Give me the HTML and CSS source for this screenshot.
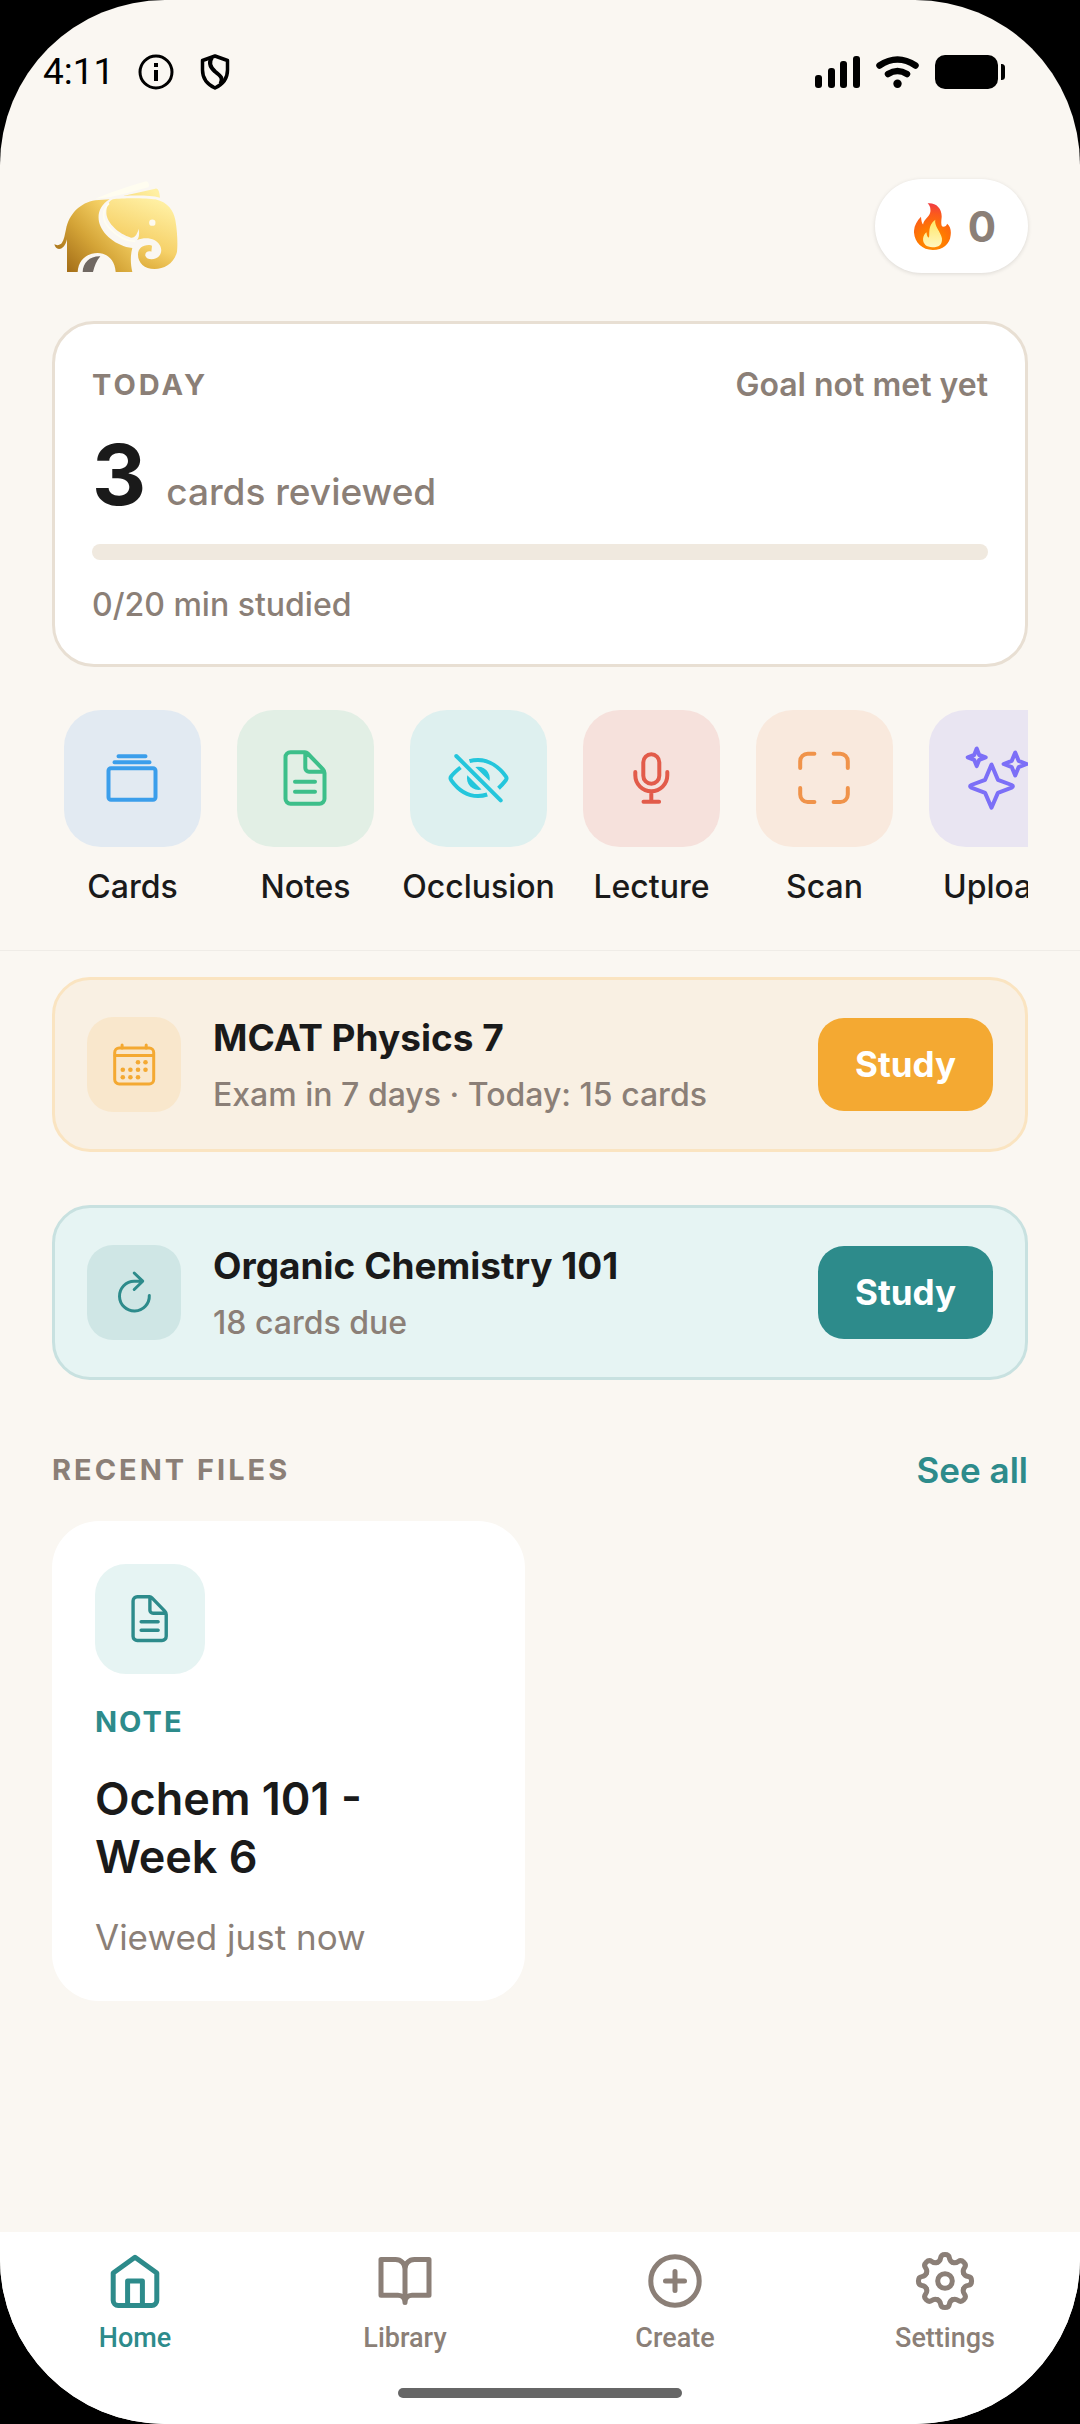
FILE: index.html
```
<!DOCTYPE html>
<html lang="en">
<head>
<meta charset="utf-8">
<meta name="viewport" content="width=device-width">
<title>Home</title>
<link rel="stylesheet" href="styles.css">
</head>
<body>
<div class="screen">
  <div class="status">
    <span class="clock">4:11</span>
    <svg class="status-info" width="36" height="36" viewBox="0 0 36 36"><circle cx="18" cy="18" r="16" fill="none" stroke="#000" stroke-width="3"/><path d="M16 9h4v4h-4zM16 16h4v11h-4z"/></svg>
    <svg width="30" height="36" viewBox="0 0 30 36" fill="none" stroke="#000" stroke-width="3.500" stroke-linejoin="round"><path d="M15 2L2.500 6.500V16c0 8 5 14.500 12.500 18C22.500 30.500 27.500 24 27.500 16V6.500z"/><path stroke-width="4" d="M12 3.500C8.500 8 10 13 15 17.500c6 4.500 8.500 7 5.500 12.500"/></svg>
    <span class="status-right">
      <svg width="45" height="32" viewBox="0 0 45 32"><rect y="19" width="7" height="13" rx="3"/><rect x="13" y="12" width="7" height="20" rx="3"/><rect x="25" y="5" width="7" height="27" rx="3"/><rect x="38" width="7" height="32" rx="3"/></svg>
      <svg width="43" height="32" viewBox="0 0 43 32" fill="none" stroke="#000" stroke-width="6.500" stroke-linecap="round"><path d="M3.500 9.500Q21.500-2.500 39.500 9.500M12 18Q21.500 12 31 18"/><circle cx="21.500" cy="27.700" r="4.200" fill="#000" stroke="none"/></svg>
      <svg width="70" height="34" viewBox="0 0 70 34"><rect width="63" height="34" rx="10"/><path d="M66 9c3 0 4 1 4 4v8c0 3-1 4-4 4z"/></svg>
    </span>
  </div>

  <header class="top">
    <div class="brand">
      <svg width="126" height="93" viewBox="35 30 378 279" role="img" aria-label="Elephant logo">
        <defs>
          <linearGradient id="gold" gradientUnits="userSpaceOnUse" x1="80" y1="330" x2="350" y2="70"><stop offset="0" stop-color="#9c6512"/><stop offset=".35" stop-color="#d4a437"/><stop offset=".62" stop-color="#f4cf63"/><stop offset="1" stop-color="#fff0a3"/></linearGradient>
          <linearGradient id="head" gradientUnits="userSpaceOnUse" x1="270" y1="300" x2="350" y2="90"><stop offset="0" stop-color="#d9a532"/><stop offset=".4" stop-color="#f6d169"/><stop offset="1" stop-color="#fff0a3"/></linearGradient>
        </defs>
        <path fill="url(#gold)" d="M80 306V208C76 225 68 237 56 237C48 237 44 230 42 223C50 227 58 226 64 220C72 208 73 195 77 178C86 132 120 98 165 91L208 88C180 105 171 130 176 155C184 192 228 228 276 234C270 255 270 280 276 306H226C224 270 200 249 172 249C140 249 114 270 112 306z"/>
        <path fill="#706862" d="M127 306C128 278 148 258 180 259C168 272 163 288 158 306z"/>
        <path fill="url(#head)" d="M218 88C245 83 320 84 345 88C385 97 400 125 405 150C412 190 412 225 410 245C402 280 372 297 343 297C312 297 293 278 293 254C293 236 306 225 325 225C330 225 334 226 335 228L333 245C323 241 313 248 315 257C318 268 335 270 347 265C363 257 367 240 358 225C348 206 318 199 290 210C298 200 296 190 296 176C290 190 286 204 272 203C235 192 200 160 198 130C198 108 205 93 218 88z"/>
        <path fill="none" stroke="#fffdf0" stroke-width="5" d="M206 100C184 120 185 150 205 172C228 196 255 214 285 214"/>
        <circle cx="336" cy="158" r="9.500" fill="#fdfaf0"/>
        <path fill="url(#gold)" d="M248 78L345 56C355 54 358 70 359 83C330 76 290 76 248 78z"/>
        <path fill="#fffdf0" d="M165 86C200 72 270 46 318 34C326 36 328 48 324 52C300 58 240 76 210 81z"/>
      </svg>
    </div>
    <button class="streak" type="button" aria-label="Streak: 0 days">
      <svg width="37" height="47" viewBox="1086 610 106 140" preserveAspectRatio="none">
        <defs>
          <radialGradient id="fire" gradientUnits="userSpaceOnUse" cx="1138" cy="725" r="110"><stop offset="0" stop-color="#ff9500"/><stop offset=".35" stop-color="#ff7a00"/><stop offset=".75" stop-color="#fb5a1c"/><stop offset="1" stop-color="#f2403f"/></radialGradient>
          <linearGradient id="core" x1="0" y1="0" x2="0" y2="1"><stop offset="0" stop-color="#ffe765"/><stop offset="1" stop-color="#fff6c0"/></linearGradient>
        </defs>
        <path fill="url(#fire)" d="M1125 611C1150 608 1168 628 1165 655C1163 672 1164 681 1170 681C1176 681 1179 677 1181 672C1190 680 1193 692 1191 706C1189 732 1168 750 1140 750C1110 750 1088 728 1086 698C1085 680 1094 664 1106 651C1107 662 1108 670 1112 674C1113 658 1132 650 1133 635C1134 623 1130 616 1125 611z"/>
        <path fill="url(#core)" d="M1147 660C1143 678 1163 697 1166 715C1168 734 1157 742 1139 742C1122 742 1111 732 1112 716C1113 707 1117 700 1122 697C1122 706 1125 713 1129 713C1132 702 1124 678 1147 660z"/>
      </svg>
      <span>0</span>
    </button>
  </header>

  <section class="overview">
    <div class="today">
      <div class="today-head"><h2 class="eyebrow">TODAY</h2><span class="goal">Goal not met yet</span></div>
      <p class="count"><strong>3</strong><span>cards reviewed</span></p>
      <div class="bar" role="progressbar" aria-label="Minutes studied" aria-valuenow="0" aria-valuemin="0" aria-valuemax="20"></div>
      <p class="minutes">0/20 min studied</p>
    </div>
    <div class="tools">
      <button class="tool" type="button"><span class="tile cards"><svg class="ico" viewBox="0 0 60 60"><path d="M15.500 7.300h27M11.500 13.300h35"/><rect x="5.500" y="19.300" width="47" height="31.400" rx="2.500"/></svg></span>Cards</button>
      <button class="tool" type="button"><span class="tile notes"><svg class="ico" viewBox="0 0 60 60"><path d="M29 3.300H14.500a5 5 0 0 0-5 5v41.400a5 5 0 0 0 5 5h29a5 5 0 0 0 5-5V24c0-1.700-.5-2.700-1.700-3.900L31.700 4.500C30.900 3.700 30 3.300 29 3.300zM29.300 4v15a3.700 3.700 0 0 0 3.700 3.700h15M19 32.700h20M19 42.700h20"/></svg></span>Notes</button>
      <button class="tool" type="button"><span class="tile occlusion"><svg class="ico" viewBox="0 0 60 60"><path d="M7.300 7l44.400 44.400"/><path stroke-linecap="butt" d="M11.500 18.500C7 22 4 25 2.300 27.300c-1 1.300-1 2.700 0 4C8.500 40 18 47 29 47c3.500 0 6.200-.5 9.200-1.500M20.500 12.200C23 11.400 26 11 29 11c11.500 0 21.500 7.500 27.800 16.300 1 1.400 1 2.700 0 4-2 2.700-4.300 5.200-7.300 8"/><path class="solid" d="M26.300 18A11.700 11.700 0 0 1 40.500 31.900zM18.300 26.300A11.700 11.700 0 0 0 32.500 40.600z"/></svg></span>Occlusion</button>
      <button class="tool" type="button"><span class="tile lecture"><svg class="ico" viewBox="0 0 60 60"><rect x="21.300" y="5.300" width="16" height="29.400" rx="8"/><path d="M13.300 23v3.300a16 16 0 0 0 32 0V23M29.300 42.300v10.400M21.500 52.700h15.600"/></svg></span>Lecture</button>
      <button class="tool" type="button"><span class="tile scan"><svg class="ico" viewBox="0 0 60 60"><path d="M19.400 4.700h-6.700a7.500 7.500 0 0 0-7.500 7.500V19M38.600 4.700h6.700a7.500 7.500 0 0 1 7.500 7.500V19M5.200 39v6.500a7.500 7.500 0 0 0 7.500 7.500h6.700M52.800 39v6.500a7.500 7.500 0 0 1-7.500 7.500h-6.700"/></svg></span>Scan</button>
      <button class="tool" type="button"><span class="tile upload"><svg class="ico" viewBox="0 0 60 60"><path d="M23.500 15.500l-6.400 15.300L3.300 36c-1.600.7-1.600 2 0 2.700l13.800 5.200 6.400 14.800 6.400-14.800 13.800-5.200c1.600-.7 1.600-2 0-2.700l-13.800-5.200zM8.700-.5L6.200 6-.3 8.300l6.500 2.500 2.500 6.300 2.500-6.300 6.500-2.500L11.200 6zM47.200 3.500l-3.400 8.300-8.200 3.200 8.200 3.200 3.400 8.300 3.400-8.300 8.200-3.200-8.200-3.200z"/></svg></span>Upload</button>
    </div>
  </section>

  <main class="feed">
    <article class="study amber">
      <span class="badge"><svg class="small" viewBox="0 0 48 48"><rect x="4.700" y="7" width="39" height="36" rx="4.500"/><path d="M5 14.500h38.500M12.100 4v3M36.200 4v3"/><g class="solid"><circle cx="28" cy="21.200" r="2.300"/><circle cx="35.500" cy="21.200" r="2.300"/><circle cx="12.800" cy="28.800" r="2.300"/><circle cx="20.400" cy="28.800" r="2.300"/><circle cx="28" cy="28.800" r="2.300"/><circle cx="35.500" cy="28.800" r="2.300"/><circle cx="12.800" cy="36.200" r="2.300"/><circle cx="20.400" cy="36.200" r="2.300"/><circle cx="28" cy="36.200" r="2.300"/></g></svg></span>
      <div class="study-text"><h3>MCAT Physics 7</h3><p>Exam in 7 days · Today: 15 cards</p></div>
      <button class="go" type="button">Study</button>
    </article>
    <article class="study teal">
      <span class="badge"><svg class="small" viewBox="0 0 48 48"><path d="M32 12.200h-7.800A14.900 14.900 0 1 0 39.300 26.500M24.200 4l8.500 8.200-8.500 8.300"/></svg></span>
      <div class="study-text"><h3>Organic Chemistry 101</h3><p>18 cards due</p></div>
      <button class="go" type="button">Study</button>
    </article>

    <div class="recent-head"><h2 class="eyebrow">RECENT FILES</h2><a href="#">See all</a></div>
    <a class="file" href="#">
      <span class="file-icon"><svg class="doc" viewBox="0 0 60 60"><path d="M29 3.300H14.500a5 5 0 0 0-5 5v41.400a5 5 0 0 0 5 5h29a5 5 0 0 0 5-5V24c0-1.700-.5-2.700-1.700-3.900L31.700 4.500C30.900 3.700 30 3.300 29 3.300zM29.300 4v15a3.700 3.700 0 0 0 3.700 3.700h15M19 32.700h20M19 42.700h20"/></svg></span>
      <span class="kind">NOTE</span>
      <span class="file-title">Ochem 101 - Week 6</span>
      <span class="viewed">Viewed just now</span>
    </a>
  </main>

  <footer class="dock">
    <nav class="tabs">
      <a class="tab active" href="#"><svg viewBox="0 0 64 64"><path d="M32 8.300L10.200 24v27.500a5 5 0 0 0 5 5h33.600a5 5 0 0 0 5-5V24zM24.600 56V32h14.800v24"/></svg>Home</a>
      <a class="tab" href="#"><svg viewBox="0 0 64 64"><path d="M32 20c0-5.500-4-9.400-9.500-9.400H8v35.600h17c4 0 7 3 7 7.300 0-4.300 3-7.300 7-7.300h17V10.600H41.500C36 10.600 32 14.500 32 20zM32 20v33.500"/></svg>Library</a>
      <a class="tab" href="#"><svg viewBox="0 0 64 64"><circle cx="32" cy="32" r="24.200"/><path d="M32 22.500v19M22.500 32h19"/></svg>Create</a>
      <a class="tab" href="#"><svg viewBox="0 0 64 64"><g transform="translate(32 32)"><circle r="7.300"/><path id="tooth" d="M-7.700-18.600C-5.200-19.600-4.700-21-4.400-23.200C-4.100-25.300-2.500-26.600 0-26.600S4.100-25.300 4.400-23.200C4.700-21 5.200-19.600 7.700-18.600"/><use href="#tooth" transform="rotate(45)"/><use href="#tooth" transform="rotate(90)"/><use href="#tooth" transform="rotate(135)"/><use href="#tooth" transform="rotate(180)"/><use href="#tooth" transform="rotate(225)"/><use href="#tooth" transform="rotate(270)"/><use href="#tooth" transform="rotate(315)"/></g></svg>Settings</a>
    </nav>
    <div class="home-bar"></div>
  </footer>
</div>
</body>
</html>
```
FILE: styles.css
```
* { box-sizing: border-box; }
html { background: #000; }
body { margin: 0; font-family: Inter, "Noto Sans", sans-serif; color: #1a1a1a; }
h2, h3, p { margin: 0; }
a { text-decoration: none; }
button { font: inherit; color: inherit; border: 0; background: none; padding: 0; cursor: pointer; }
svg { display: block; flex: none; }

.screen {
  min-height: 100vh;
  display: flex;
  flex-direction: column;
  background: #faf7f2;
  border-radius: 165px;
  overflow: hidden;
}

/* Status bar */
.status { display: flex; align-items: center; height: 143px; padding: 0 75px 0 43px; }
.clock { font: 400 37px/44px Roboto, sans-serif; color: #000; }
.status-info { margin: 0 26px 0 24px; }
.status-right { display: flex; align-items: center; gap: 16px; margin-left: auto; }

/* Header */
.top { display: flex; align-items: center; justify-content: space-between; padding: 36px 52px 48px; }
.streak {
  display: flex;
  align-items: center;
  gap: 17px;
  height: 94px;
  padding: 0 32px 0 39px;
  border-radius: 47px;
  background: #fff;
  box-shadow: 0 1px 4px rgba(0, 0, 0, .12);
  color: #8b7f77;
  font-size: 42px;
  font-weight: 700;
}

/* Daily progress and tools */
.overview { padding: 0 52px 43px; border-bottom: 1px solid #efece7; }
.today { padding: 41px 37px 39px; border: 3px solid #e8dfd3; border-radius: 42px; background: #fff; color: #8b7f77; }
.today-head, .recent-head { display: flex; align-items: center; justify-content: space-between; }
.eyebrow { font-size: 29px; line-height: 36px; font-weight: 700; letter-spacing: 3px; color: #8b7f77; }
.goal { font-size: 32px; line-height: 40px; font-weight: 600; }
.count { display: flex; align-items: baseline; gap: 20px; margin: 20px 0 19px; font-size: 37px; font-weight: 500; line-height: 40px; }
.count strong { font-size: 84px; line-height: 100px; font-weight: 700; color: #1a1a1a; }
.bar { height: 16px; border-radius: 8px; background: #f0e9df; }
.minutes { margin-top: 25px; font-size: 32px; line-height: 40px; font-weight: 500; }

.tools { display: flex; gap: 20px; margin-top: 43px; padding-left: 4px; overflow-x: auto; scrollbar-width: none; }
.tool { flex: none; width: 153px; display: flex; flex-direction: column; align-items: center; gap: 20px; font-size: 32px; line-height: 40px; font-weight: 500; }
.tile { display: grid; place-items: center; width: 137px; height: 137px; border-radius: 37px; }
.ico, .small, .doc, .tab svg { fill: none; stroke: currentColor; stroke-linecap: round; stroke-linejoin: round; }
.ico .solid, .small .solid { fill: currentColor; stroke: none; }
.ico { width: 60px; height: 60px; stroke-width: 4; overflow: visible; }
.cards { background: #e2eaf2; color: #3b9eeb; }
.notes { background: #e2efe5; color: #3dbf8a; }
.occlusion { background: #def0ef; color: #24c6dc; }
.lecture { background: #f6e1dc; color: #e25b4a; }
.scan { background: #f9e9dd; color: #f0934a; }
.upload { background: #e9e5f2; color: #7c6ff7; }

/* Study cards */
.feed { flex: 1; padding: 26px 52px 100px; }
.study { display: flex; align-items: center; gap: 32px; padding: 34px 32px; border: 3px solid; border-radius: 38px; }
.study + .study { margin-top: 53px; }
.amber { background: #f9f0e3; border-color: #fae4c1; }
.teal { background: #e6f4f3; border-color: #c8e1e0; }
.badge { display: grid; place-items: center; width: 94px; height: 95px; border-radius: 26px; }
.small { width: 48px; height: 48px; stroke-width: 3; }
.amber .badge { background: #f9e7cc; color: #f4a932; }
.teal .badge { background: #cfe6e5; color: #2d8b8b; }
.study-text { flex: 1; display: flex; flex-direction: column; gap: 13px; }
.study-text h3 { font-size: 37px; line-height: 48px; font-weight: 700; }
.study-text p { font-size: 32px; line-height: 40px; font-weight: 500; color: #8b7f77; }
.go { padding: 24px 37px; border-radius: 26px; color: #fff; font-size: 35px; line-height: 45px; font-weight: 700; }
.amber .go { background: #f4a932; }
.teal .go { background: #2d8b8b; }

/* Recent files */
.recent-head { margin: 68px 0 29px; }
.recent-head a { font-size: 35px; line-height: 44px; font-weight: 600; color: #2d8b8b; }
.file { display: flex; flex-direction: column; align-items: flex-start; gap: 30px; width: 473px; max-width: 100%; padding: 43px; border-radius: 47px; background: #fff; color: #1a1a1a; }
.file-icon { display: grid; place-items: center; width: 110px; height: 110px; border-radius: 31px; background: #e6f4f3; color: #2d8b8b; }
.doc { width: 51px; height: 51px; stroke-width: 4; }
.kind { font-size: 29px; line-height: 36px; font-weight: 700; letter-spacing: 2px; color: #2d8b8b; }
.file-title { max-width: 300px; font-size: 45px; line-height: 58px; font-weight: 600; }
.viewed { font-size: 35px; line-height: 42px; color: #8b7f77; }

/* Bottom navigation */
.dock { padding: 17px 0 26px; background: #fff; }
.tabs { display: grid; grid-template-columns: repeat(4, 1fr); }
.tab { display: flex; flex-direction: column; align-items: center; gap: 9px; font: 500 27px/32px Roboto, sans-serif; color: #8b7f77; }
.tab svg { width: 64px; height: 64px; stroke-width: 5; }
.active { color: #2d8b8b; }
.home-bar { width: 284px; height: 10px; margin: 34px auto 0; border-radius: 5px; background: #666; }
```
